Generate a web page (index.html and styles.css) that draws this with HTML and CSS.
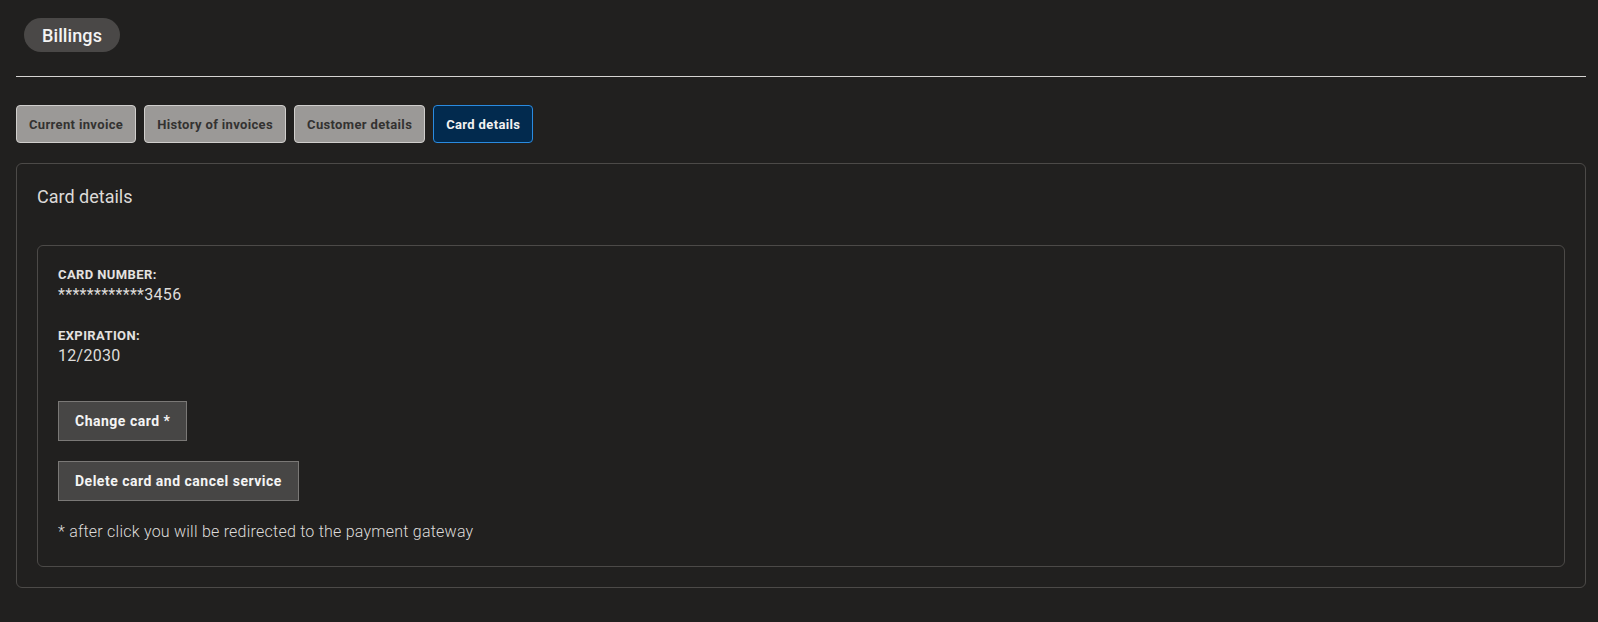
FILE: index.html
```html
<!DOCTYPE html>
<html lang="en">
<head>
  <meta charset="UTF-8">
  <meta name="viewport" content="width=device-width, initial-scale=1.0">
  <title>Billings</title>
  <link rel="stylesheet" href="styles.css">
</head>
<body>
  <!-- Page header -->
  <div class="page-header">
    <span class="page-title">Billings</span>
  </div>
  <hr class="divider">

  <!-- Tabs -->
  <div class="tabs">
    <button class="tab">Current invoice</button>
    <button class="tab">History of invoices</button>
    <button class="tab">Customer details</button>
    <button class="tab active">Card details</button>
  </div>

  <div class="panel">
    <h2 class="panel-title">Card details</h2>

    <div class="card-box">
      <div class="field">
        <div class="field-label">Card number:</div>
        <div class="field-value">************3456</div>
      </div>
      <div class="field">
        <div class="field-label">Expiration:</div>
        <div class="field-value">12/2030</div>
      </div>

      <div class="actions">
        <button class="action-button">Change card *</button>
        <button class="action-button">Delete card and cancel service</button>
      </div>

      <p class="note">* after click you will be redirected to the payment gateway</p>
    </div>
  </div>
</body>
</html>
```

FILE: styles.css
```css
body {
  font-family: Roboto, "Noto Sans", Arial, sans-serif;
  background-color: #21201f;
  color: #e2e0de;
  margin: 0;
  padding: 18px 12px 35px 16px;
}

/* Header */
.page-header {
  display: flex;
  padding-left: 8px;
}

.page-title {
  display: inline-flex;
  align-items: center;
  height: 34px;
  padding: 0 18px;
  border-radius: 17px;
  background-color: #4a4847;
  color: #f4f4f4;
  font-size: 18px;
  font-weight: 500;
  letter-spacing: 0.1px;
}

.divider {
  border: none;
  border-top: 1px solid #d6d4d2;
  margin: 24px 0 28px;
}

/* Tabs */
.tabs {
  display: flex;
  gap: 8px;
  margin-bottom: 20px;
}

.tab {
  height: 38px;
  padding: 0 12px;
  font-family: inherit;
  font-size: 13px;
  font-weight: 700;
  letter-spacing: 0.35px;
  color: #333231;
  background-color: #9b9997;
  border: 1px solid #d0cecc;
  border-radius: 4px;
  cursor: pointer;
}

.tab.active {
  background-color: #022a4e;
  border-color: #2a8be0;
  color: #f2f2f2;
}

/* Panel */
.panel {
  border: 1px solid #4c4a48;
  border-radius: 6px;
  padding: 20px;
}

.panel-title {
  margin: 0 0 35px;
  font-size: 18px;
  font-weight: 400;
  line-height: 26px;
  color: #dcdad8;
}

.card-box {
  border: 1px solid #4c4a48;
  border-radius: 6px;
  padding: 20px 20px 23px;
}

.field {
  margin-bottom: 21px;
}

.field-label {
  font-size: 13px;
  font-weight: 700;
  line-height: 18px;
  letter-spacing: 0.4px;
  text-transform: uppercase;
  color: #e4e2e0;
}

.field-value {
  font-size: 16px;
  line-height: 22px;
  letter-spacing: 0.3px;
  color: #dedcda;
}

.actions {
  display: flex;
  flex-direction: column;
  align-items: flex-start;
  gap: 20px;
  margin-top: 34px;
}

.action-button {
  height: 40px;
  padding: 0 16px;
  font-family: inherit;
  font-size: 14px;
  font-weight: 700;
  letter-spacing: 0.5px;
  color: #f4f4f4;
  background-color: #474645;
  border: 1px solid #7a7876;
  cursor: pointer;
}

.note {
  margin: 20px 0 0;
  font-size: 16px;
  line-height: 22px;
  font-weight: 300;
  letter-spacing: 0.23px;
  color: #dedcda;
}
```
